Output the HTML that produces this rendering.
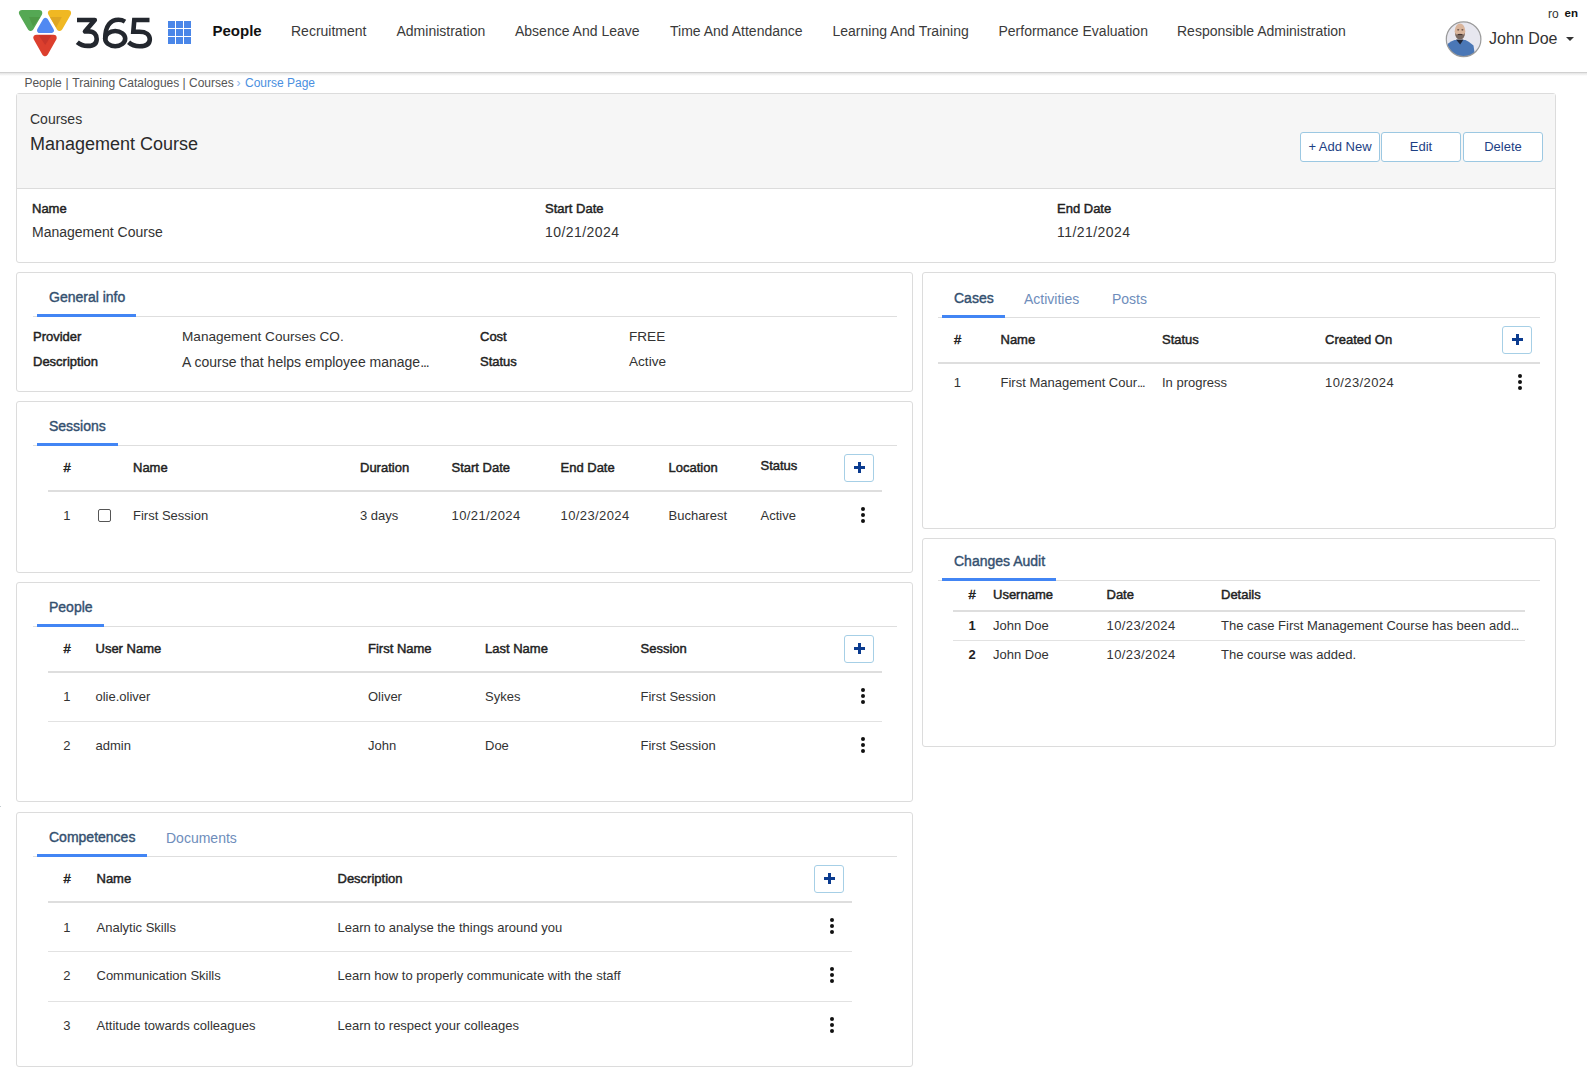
<!DOCTYPE html>
<html><head><meta charset="utf-8"><title>Course Page</title>
<style>
html,body{margin:0;padding:0;background:#fff;width:1587px;height:1072px;overflow:hidden;position:relative;font-family:"Liberation Sans",sans-serif;}
.t{position:absolute;white-space:nowrap;line-height:1;}
</style></head><body>
<div style="position:absolute;left:0px;top:0px;width:1587px;height:72px;background:#fff"></div>
<div style="position:absolute;left:0px;top:72px;width:1587px;height:1px;background:#d0d0d0"></div>
<div style="position:absolute;left:0px;top:73px;width:1587px;height:3px;background:linear-gradient(#e4e4e4,#fff)"></div>
<svg style="position:absolute;left:0;top:0" width="80" height="60" viewBox="0 0 80 60">
<g stroke-linejoin="round">
<path d="M22.2,13.1 L39.1,13.1 L30.65,27.7 Z" fill="#55a854" stroke="#55a854" stroke-width="6.4"/>
<path d="M51.2,13.1 L67.9,13.1 L59.55,27.7 Z" fill="#f0b823" stroke="#f0b823" stroke-width="6.4"/>
<path d="M45.45,20.6 L51.1,30.3 L39.8,30.3 Z" fill="#5189f2" stroke="#5189f2" stroke-width="5.6"/>
<path d="M36.6,37.9 L53.5,37.9 L45.05,52.9 Z" fill="#dc3f2e" stroke="#dc3f2e" stroke-width="6.4"/>
</g>
<path d="M29,17.1 L40.3,17.1 L33.1,26.6 Z" fill="#4e9a47"/>
<path d="M50,17.1 L61.8,17.1 L56.2,27.6 Z" fill="#dea623"/>
<path d="M38.7,35.3 L51.6,35.3 L45.2,45 Z" fill="#c8352b"/>
</svg>
<svg style="position:absolute;left:0;top:0" width="160" height="60" viewBox="0 0 160 60">
<g fill="none" stroke="#23272e" stroke-width="4.6" stroke-linejoin="miter" stroke-linecap="butt">
<path d="M77,20 H94.8 L85,31.4 H88.5 C94.3,31.4 96.7,34.8 96.7,38.9 C96.7,43.6 93.2,45.9 87.6,45.9 C83.5,45.9 80,44.6 77.3,42.2" stroke-linejoin="round"/>
<ellipse cx="115.2" cy="38.6" rx="10" ry="7.6"/>
<path d="M105.2,39 C105.2,25 111,19.8 118.5,19.8 C121,19.8 123,20.4 125,21.6"/>
<path d="M149.5,20 H134.3 L133.3,31.8 H139.5 C146,31.8 149.8,34.6 149.8,39.3 C149.8,44.3 145.6,46.3 139.6,46.3 C135.1,46.3 131.3,44.8 128.6,42.3"/>
</g></svg>
<div style="position:absolute;left:168px;top:21px;width:7px;height:7px;background:#4a86e8"></div>
<div style="position:absolute;left:176px;top:21px;width:7px;height:7px;background:#4a86e8"></div>
<div style="position:absolute;left:184px;top:21px;width:7px;height:7px;background:#4a86e8"></div>
<div style="position:absolute;left:168px;top:29px;width:7px;height:7px;background:#4a86e8"></div>
<div style="position:absolute;left:176px;top:29px;width:7px;height:7px;background:#4a86e8"></div>
<div style="position:absolute;left:184px;top:29px;width:7px;height:7px;background:#4a86e8"></div>
<div style="position:absolute;left:168px;top:37px;width:7px;height:7px;background:#4a86e8"></div>
<div style="position:absolute;left:176px;top:37px;width:7px;height:7px;background:#4a86e8"></div>
<div style="position:absolute;left:184px;top:37px;width:7px;height:7px;background:#4a86e8"></div>
<div class="t" style="left:212.5px;top:23.30px;font-size:15px;font-weight:700;color:#111;">People</div>
<div class="t" style="left:291px;top:24.15px;font-size:14px;font-weight:400;color:#3a3a3a;">Recruitment</div>
<div class="t" style="left:396.5px;top:24.15px;font-size:14px;font-weight:400;color:#3a3a3a;">Administration</div>
<div class="t" style="left:515px;top:24.15px;font-size:14px;font-weight:400;color:#3a3a3a;">Absence And Leave</div>
<div class="t" style="left:670px;top:24.15px;font-size:14px;font-weight:400;color:#3a3a3a;">Time And Attendance</div>
<div class="t" style="left:832.5px;top:24.15px;font-size:14px;font-weight:400;color:#3a3a3a;">Learning And Training</div>
<div class="t" style="left:998.5px;top:24.15px;font-size:14px;font-weight:400;color:#3a3a3a;">Performance Evaluation</div>
<div class="t" style="left:1177px;top:24.15px;font-size:14px;font-weight:400;color:#3a3a3a;">Responsible Administration</div>
<div class="t" style="left:1548px;top:7.84px;font-size:12px;font-weight:400;color:#333;">ro</div>
<div class="t" style="left:1564.5px;top:8.27px;font-size:11.5px;font-weight:700;color:#111;">en</div>
<svg style="position:absolute;left:1445px;top:21px" width="38" height="38" viewBox="0 0 38 38">
<defs><clipPath id="cc"><circle cx="18.6" cy="18.25" r="17.2"/></clipPath></defs>
<g clip-path="url(#cc)">
<rect width="38" height="38" fill="#e7e7ef"/>
<path d="M2.5,23 Q6,20 9.5,19 L20.5,19 Q25,21 28.5,24.5 L29.5,31.5 L30,38 L2,38 Z" fill="#4a77b6"/>
<path d="M11,18.5 L18.5,18.5 L15.2,23.5 Z" fill="#1f2638"/>
<ellipse cx="15" cy="10.3" rx="5.3" ry="7.9" fill="#d9b59c"/>
<path d="M9.9,11.5 Q10.5,18.5 15,18.4 Q19.5,18.5 20.1,11.5 L19,13.5 Q15,12 11,13.5 Z" fill="#7a6a62"/>
<ellipse cx="13.2" cy="8.8" rx="1.1" ry="0.6" fill="#4a3630"/>
<ellipse cx="17.4" cy="8.8" rx="1.1" ry="0.6" fill="#4a3630"/>
<rect x="13" y="13.2" width="4.2" height="0.9" fill="#3b2a26"/>
</g>
<circle cx="18.6" cy="18.25" r="17.3" fill="none" stroke="#9a9a9a" stroke-width="1.2"/>
</svg>
<div class="t" style="left:1489px;top:30.96px;font-size:16px;font-weight:400;color:#333;">John Doe</div>
<div style="position:absolute;left:1566px;top:37px;width:0;height:0;border-left:4px solid transparent;border-right:4px solid transparent;border-top:4px solid #333"></div>
<div class="t" style="left:24.4px;top:76.84px;font-size:12px;font-weight:400;color:#555;">People</div>
<div class="t" style="left:65.5px;top:76.84px;font-size:12px;font-weight:400;color:#555;">|</div>
<div class="t" style="left:72.3px;top:76.84px;font-size:12px;font-weight:400;color:#555;">Training Catalogues</div>
<div class="t" style="left:182.5px;top:76.84px;font-size:12px;font-weight:400;color:#555;">|</div>
<div class="t" style="left:189px;top:76.84px;font-size:12px;font-weight:400;color:#555;">Courses</div>
<div class="t" style="left:236.5px;top:76.84px;font-size:12px;font-weight:400;color:#8ab4ec;">&#x203A;</div>
<div class="t" style="left:245px;top:76.84px;font-size:12px;font-weight:400;color:#4a8fe0;">Course Page</div>
<div style="position:absolute;left:16px;top:93px;width:1540px;height:170px;box-sizing:border-box;border:1px solid #dcdcdc;border-radius:3px;background:#fff;overflow:hidden"></div>
<div style="position:absolute;left:17px;top:94px;width:1538px;height:94px;background:#f6f6f6"></div>
<div style="position:absolute;left:17px;top:188px;width:1538px;height:1px;background:#dcdcdc"></div>
<div class="t" style="left:30px;top:112.15px;font-size:14px;font-weight:400;color:#333;">Courses</div>
<div class="t" style="left:30px;top:135.26px;font-size:18px;font-weight:400;color:#2a2a2a;">Management Course</div>
<div style="position:absolute;left:1300px;top:132px;width:80px;height:30px;box-sizing:border-box;border:1px solid #9cc8e2;border-radius:3px;background:#fff;color:#1d3f84;font-size:13px;line-height:28px;text-align:center;white-space:nowrap">+ Add New</div>
<div style="position:absolute;left:1381px;top:132px;width:80px;height:30px;box-sizing:border-box;border:1px solid #9cc8e2;border-radius:3px;background:#fff;color:#1d3f84;font-size:13px;line-height:28px;text-align:center;white-space:nowrap">Edit</div>
<div style="position:absolute;left:1463px;top:132px;width:80px;height:30px;box-sizing:border-box;border:1px solid #9cc8e2;border-radius:3px;background:#fff;color:#1d3f84;font-size:13px;line-height:28px;text-align:center;white-space:nowrap">Delete</div>
<div class="t" style="left:32px;top:201.90px;font-size:13px;font-weight:400;color:#222;-webkit-text-stroke:0.45px #222;">Name</div>
<div class="t" style="left:32px;top:225.35px;font-size:14px;font-weight:400;color:#333;">Management Course</div>
<div class="t" style="left:545px;top:201.90px;font-size:13px;font-weight:400;color:#222;-webkit-text-stroke:0.45px #222;">Start Date</div>
<div class="t" style="left:545px;top:225.35px;font-size:14px;font-weight:400;color:#333;letter-spacing:0.45px">10/21/2024</div>
<div class="t" style="left:1057px;top:201.90px;font-size:13px;font-weight:400;color:#222;-webkit-text-stroke:0.45px #222;">End Date</div>
<div class="t" style="left:1057px;top:225.35px;font-size:14px;font-weight:400;color:#333;letter-spacing:0.45px">11/21/2024</div>
<div style="position:absolute;left:16px;top:272px;width:897px;height:120px;box-sizing:border-box;border:1px solid #dcdcdc;border-radius:3px;background:#fff"></div>
<div style="position:absolute;left:33px;top:316px;width:864px;height:1px;background:#dedede"></div>
<div class="t" style="left:49px;top:289.55px;font-size:14px;font-weight:400;color:#34506f;-webkit-text-stroke:0.4px #34506f;">General info</div>
<div style="position:absolute;left:37px;top:314px;width:99px;height:3px;background:#4285f4"></div>
<div class="t" style="left:33px;top:329.60px;font-size:13px;font-weight:400;color:#222;-webkit-text-stroke:0.45px #222;">Provider</div>
<div class="t" style="left:33px;top:354.90px;font-size:13px;font-weight:400;color:#222;-webkit-text-stroke:0.45px #222;">Description</div>
<div class="t" style="left:182px;top:329.69px;font-size:13.6px;font-weight:400;color:#333;">Management Courses CO.</div>
<div class="t" style="left:182px;top:354.65px;font-size:14px;font-weight:400;color:#333;">A course that helps employee manage<span style="letter-spacing:-1.1px">...</span></div>
<div class="t" style="left:480px;top:329.60px;font-size:13px;font-weight:400;color:#222;-webkit-text-stroke:0.45px #222;">Cost</div>
<div class="t" style="left:480px;top:354.90px;font-size:13px;font-weight:400;color:#222;-webkit-text-stroke:0.45px #222;">Status</div>
<div class="t" style="left:629px;top:329.69px;font-size:13.6px;font-weight:400;color:#333;">FREE</div>
<div class="t" style="left:629px;top:354.99px;font-size:13.6px;font-weight:400;color:#333;">Active</div>
<div style="position:absolute;left:16px;top:401px;width:897px;height:172px;box-sizing:border-box;border:1px solid #dcdcdc;border-radius:3px;background:#fff"></div>
<div style="position:absolute;left:33px;top:445px;width:864px;height:1px;background:#dedede"></div>
<div class="t" style="left:49px;top:418.55px;font-size:14px;font-weight:400;color:#34506f;-webkit-text-stroke:0.4px #34506f;">Sessions</div>
<div style="position:absolute;left:37px;top:443px;width:81px;height:3px;background:#4285f4"></div>
<div class="t" style="left:63.6px;top:460.90px;font-size:13px;font-weight:400;color:#222;-webkit-text-stroke:0.45px #222;">#</div>
<div class="t" style="left:133px;top:460.90px;font-size:13px;font-weight:400;color:#222;-webkit-text-stroke:0.45px #222;">Name</div>
<div class="t" style="left:360px;top:460.90px;font-size:13px;font-weight:400;color:#222;-webkit-text-stroke:0.45px #222;">Duration</div>
<div class="t" style="left:451.5px;top:460.90px;font-size:13px;font-weight:400;color:#222;-webkit-text-stroke:0.45px #222;">Start Date</div>
<div class="t" style="left:560.5px;top:460.90px;font-size:13px;font-weight:400;color:#222;-webkit-text-stroke:0.45px #222;">End Date</div>
<div class="t" style="left:668.5px;top:460.90px;font-size:13px;font-weight:400;color:#222;-webkit-text-stroke:0.45px #222;">Location</div>
<div class="t" style="left:760.5px;top:459.00px;font-size:13px;font-weight:400;color:#222;-webkit-text-stroke:0.45px #222;">Status</div>
<div style="position:absolute;left:844px;top:454px;width:30px;height:28px;box-sizing:border-box;border:1px solid #a6cfe6;border-radius:3px;background:#fff"></div>
<div style="position:absolute;left:853.5px;top:466.0px;width:11px;height:3px;background:#0b3b8f"></div>
<div style="position:absolute;left:857.5px;top:462.0px;width:3px;height:11px;background:#0b3b8f"></div>
<div style="position:absolute;left:48px;top:490px;width:834px;height:2px;background:#dedede"></div>
<div class="t" style="left:63.3px;top:509.00px;font-size:13px;font-weight:400;color:#333;">1</div>
<div style="position:absolute;left:98px;top:509px;width:13px;height:13px;box-sizing:border-box;border:1px solid #555;border-radius:2px;background:#fff"></div>
<div class="t" style="left:133px;top:509.00px;font-size:13px;font-weight:400;color:#333;">First Session</div>
<div class="t" style="left:360px;top:509.00px;font-size:13px;font-weight:400;color:#333;">3 days</div>
<div class="t" style="left:451.5px;top:509.00px;font-size:13px;font-weight:400;color:#333;letter-spacing:0.4px;">10/21/2024</div>
<div class="t" style="left:560.5px;top:509.00px;font-size:13px;font-weight:400;color:#333;letter-spacing:0.4px;">10/23/2024</div>
<div class="t" style="left:668.5px;top:509.00px;font-size:13px;font-weight:400;color:#333;">Bucharest</div>
<div class="t" style="left:760.5px;top:509.00px;font-size:13px;font-weight:400;color:#333;">Active</div>
<div style="position:absolute;left:860.5px;top:507px;width:4px;height:4px;border-radius:50%;background:#111"></div>
<div style="position:absolute;left:860.5px;top:513px;width:4px;height:4px;border-radius:50%;background:#111"></div>
<div style="position:absolute;left:860.5px;top:519px;width:4px;height:4px;border-radius:50%;background:#111"></div>
<div style="position:absolute;left:16px;top:582px;width:897px;height:220px;box-sizing:border-box;border:1px solid #dcdcdc;border-radius:3px;background:#fff"></div>
<div style="position:absolute;left:33px;top:626px;width:864px;height:1px;background:#dedede"></div>
<div class="t" style="left:49px;top:600.05px;font-size:14px;font-weight:400;color:#34506f;-webkit-text-stroke:0.4px #34506f;">People</div>
<div style="position:absolute;left:37px;top:624px;width:67px;height:3px;background:#4285f4"></div>
<div class="t" style="left:63.6px;top:641.70px;font-size:13px;font-weight:400;color:#222;-webkit-text-stroke:0.45px #222;">#</div>
<div class="t" style="left:95.5px;top:641.70px;font-size:13px;font-weight:400;color:#222;-webkit-text-stroke:0.45px #222;">User Name</div>
<div class="t" style="left:368px;top:641.70px;font-size:13px;font-weight:400;color:#222;-webkit-text-stroke:0.45px #222;">First Name</div>
<div class="t" style="left:485px;top:641.70px;font-size:13px;font-weight:400;color:#222;-webkit-text-stroke:0.45px #222;">Last Name</div>
<div class="t" style="left:640.5px;top:641.70px;font-size:13px;font-weight:400;color:#222;-webkit-text-stroke:0.45px #222;">Session</div>
<div style="position:absolute;left:844px;top:635px;width:30px;height:28px;box-sizing:border-box;border:1px solid #a6cfe6;border-radius:3px;background:#fff"></div>
<div style="position:absolute;left:853.5px;top:647.0px;width:11px;height:3px;background:#0b3b8f"></div>
<div style="position:absolute;left:857.5px;top:643.0px;width:3px;height:11px;background:#0b3b8f"></div>
<div style="position:absolute;left:48px;top:671px;width:834px;height:2px;background:#dedede"></div>
<div class="t" style="left:63.3px;top:690.00px;font-size:13px;font-weight:400;color:#333;">1</div>
<div class="t" style="left:95.5px;top:690.00px;font-size:13px;font-weight:400;color:#333;">olie.oliver</div>
<div class="t" style="left:368px;top:690.00px;font-size:13px;font-weight:400;color:#333;">Oliver</div>
<div class="t" style="left:485px;top:690.00px;font-size:13px;font-weight:400;color:#333;">Sykes</div>
<div class="t" style="left:640.5px;top:690.00px;font-size:13px;font-weight:400;color:#333;">First Session</div>
<div style="position:absolute;left:860.5px;top:688px;width:4px;height:4px;border-radius:50%;background:#111"></div>
<div style="position:absolute;left:860.5px;top:694px;width:4px;height:4px;border-radius:50%;background:#111"></div>
<div style="position:absolute;left:860.5px;top:700px;width:4px;height:4px;border-radius:50%;background:#111"></div>
<div class="t" style="left:63.3px;top:739.40px;font-size:13px;font-weight:400;color:#333;">2</div>
<div class="t" style="left:95.5px;top:739.40px;font-size:13px;font-weight:400;color:#333;">admin</div>
<div class="t" style="left:368px;top:739.40px;font-size:13px;font-weight:400;color:#333;">John</div>
<div class="t" style="left:485px;top:739.40px;font-size:13px;font-weight:400;color:#333;">Doe</div>
<div class="t" style="left:640.5px;top:739.40px;font-size:13px;font-weight:400;color:#333;">First Session</div>
<div style="position:absolute;left:860.5px;top:737px;width:4px;height:4px;border-radius:50%;background:#111"></div>
<div style="position:absolute;left:860.5px;top:743px;width:4px;height:4px;border-radius:50%;background:#111"></div>
<div style="position:absolute;left:860.5px;top:749px;width:4px;height:4px;border-radius:50%;background:#111"></div>
<div style="position:absolute;left:48px;top:721px;width:834px;height:1px;background:#e2e2e2"></div>
<div style="position:absolute;left:16px;top:812px;width:897px;height:255px;box-sizing:border-box;border:1px solid #dcdcdc;border-radius:3px;background:#fff"></div>
<div style="position:absolute;left:33px;top:856px;width:864px;height:1px;background:#dedede"></div>
<div class="t" style="left:49px;top:830.05px;font-size:14px;font-weight:400;color:#34506f;-webkit-text-stroke:0.4px #34506f;">Competences</div>
<div style="position:absolute;left:37px;top:854px;width:110px;height:3px;background:#4285f4"></div>
<div class="t" style="left:166px;top:831.35px;font-size:14px;font-weight:400;color:#6e8dbb;">Documents</div>
<div class="t" style="left:63.6px;top:871.70px;font-size:13px;font-weight:400;color:#222;-webkit-text-stroke:0.45px #222;">#</div>
<div class="t" style="left:96.5px;top:871.70px;font-size:13px;font-weight:400;color:#222;-webkit-text-stroke:0.45px #222;">Name</div>
<div class="t" style="left:337.5px;top:871.70px;font-size:13px;font-weight:400;color:#222;-webkit-text-stroke:0.45px #222;">Description</div>
<div style="position:absolute;left:814px;top:865px;width:30px;height:28px;box-sizing:border-box;border:1px solid #a6cfe6;border-radius:3px;background:#fff"></div>
<div style="position:absolute;left:823.5px;top:877.0px;width:11px;height:3px;background:#0b3b8f"></div>
<div style="position:absolute;left:827.5px;top:873.0px;width:3px;height:11px;background:#0b3b8f"></div>
<div style="position:absolute;left:48px;top:901px;width:804px;height:2px;background:#dedede"></div>
<div class="t" style="left:63.3px;top:920.70px;font-size:13px;font-weight:400;color:#333;">1</div>
<div class="t" style="left:96.5px;top:920.70px;font-size:13px;font-weight:400;color:#333;">Analytic Skills</div>
<div class="t" style="left:337.5px;top:920.70px;font-size:13px;font-weight:400;color:#333;">Learn to analyse the things around you</div>
<div style="position:absolute;left:830px;top:918px;width:4px;height:4px;border-radius:50%;background:#111"></div>
<div style="position:absolute;left:830px;top:924px;width:4px;height:4px;border-radius:50%;background:#111"></div>
<div style="position:absolute;left:830px;top:930px;width:4px;height:4px;border-radius:50%;background:#111"></div>
<div class="t" style="left:63.3px;top:969.40px;font-size:13px;font-weight:400;color:#333;">2</div>
<div class="t" style="left:96.5px;top:969.40px;font-size:13px;font-weight:400;color:#333;">Communication Skills</div>
<div class="t" style="left:337.5px;top:969.40px;font-size:13px;font-weight:400;color:#333;">Learn how to properly communicate with the staff</div>
<div style="position:absolute;left:830px;top:967px;width:4px;height:4px;border-radius:50%;background:#111"></div>
<div style="position:absolute;left:830px;top:973px;width:4px;height:4px;border-radius:50%;background:#111"></div>
<div style="position:absolute;left:830px;top:979px;width:4px;height:4px;border-radius:50%;background:#111"></div>
<div class="t" style="left:63.3px;top:1019.20px;font-size:13px;font-weight:400;color:#333;">3</div>
<div class="t" style="left:96.5px;top:1019.20px;font-size:13px;font-weight:400;color:#333;">Attitude towards colleagues</div>
<div class="t" style="left:337.5px;top:1019.20px;font-size:13px;font-weight:400;color:#333;">Learn to respect your colleages</div>
<div style="position:absolute;left:830px;top:1017px;width:4px;height:4px;border-radius:50%;background:#111"></div>
<div style="position:absolute;left:830px;top:1023px;width:4px;height:4px;border-radius:50%;background:#111"></div>
<div style="position:absolute;left:830px;top:1029px;width:4px;height:4px;border-radius:50%;background:#111"></div>
<div style="position:absolute;left:48px;top:951px;width:804px;height:1px;background:#e2e2e2"></div>
<div style="position:absolute;left:48px;top:1001px;width:804px;height:1px;background:#e2e2e2"></div>
<div style="position:absolute;left:0px;top:806px;width:1px;height:1px;background:#c4ccd0"></div>
<div style="position:absolute;left:922px;top:272px;width:634px;height:257px;box-sizing:border-box;border:1px solid #dcdcdc;border-radius:3px;background:#fff"></div>
<div style="position:absolute;left:938px;top:317px;width:602px;height:1px;background:#dedede"></div>
<div class="t" style="left:954px;top:290.85px;font-size:14px;font-weight:400;color:#34506f;-webkit-text-stroke:0.4px #34506f;">Cases</div>
<div style="position:absolute;left:942px;top:315px;width:63px;height:3px;background:#4285f4"></div>
<div class="t" style="left:1024px;top:292.15px;font-size:14px;font-weight:400;color:#6e8dbb;">Activities</div>
<div class="t" style="left:1112px;top:292.15px;font-size:14px;font-weight:400;color:#6e8dbb;">Posts</div>
<div class="t" style="left:954px;top:332.90px;font-size:13px;font-weight:400;color:#222;-webkit-text-stroke:0.45px #222;">#</div>
<div class="t" style="left:1000.5px;top:332.90px;font-size:13px;font-weight:400;color:#222;-webkit-text-stroke:0.45px #222;">Name</div>
<div class="t" style="left:1162px;top:332.90px;font-size:13px;font-weight:400;color:#222;-webkit-text-stroke:0.45px #222;">Status</div>
<div class="t" style="left:1325px;top:332.90px;font-size:13px;font-weight:400;color:#222;-webkit-text-stroke:0.45px #222;">Created On</div>
<div style="position:absolute;left:1502px;top:326px;width:30px;height:28px;box-sizing:border-box;border:1px solid #a6cfe6;border-radius:3px;background:#fff"></div>
<div style="position:absolute;left:1511.5px;top:338.0px;width:11px;height:3px;background:#0b3b8f"></div>
<div style="position:absolute;left:1515.5px;top:334.0px;width:3px;height:11px;background:#0b3b8f"></div>
<div style="position:absolute;left:938px;top:362px;width:602px;height:2px;background:#dedede"></div>
<div class="t" style="left:953.8px;top:376.40px;font-size:13px;font-weight:400;color:#333;">1</div>
<div class="t" style="left:1000.5px;top:376.40px;font-size:13px;font-weight:400;color:#333;">First Management Cour<span style="letter-spacing:-1.1px">...</span></div>
<div class="t" style="left:1162px;top:376.40px;font-size:13px;font-weight:400;color:#333;">In progress</div>
<div class="t" style="left:1325px;top:376.40px;font-size:13px;font-weight:400;color:#333;letter-spacing:0.4px;">10/23/2024</div>
<div style="position:absolute;left:1518px;top:374px;width:4px;height:4px;border-radius:50%;background:#111"></div>
<div style="position:absolute;left:1518px;top:380px;width:4px;height:4px;border-radius:50%;background:#111"></div>
<div style="position:absolute;left:1518px;top:386px;width:4px;height:4px;border-radius:50%;background:#111"></div>
<div style="position:absolute;left:922px;top:538px;width:634px;height:209px;box-sizing:border-box;border:1px solid #dcdcdc;border-radius:3px;background:#fff"></div>
<div style="position:absolute;left:938px;top:580px;width:602px;height:1px;background:#dedede"></div>
<div class="t" style="left:954px;top:554.25px;font-size:14px;font-weight:400;color:#34506f;-webkit-text-stroke:0.4px #34506f;">Changes Audit</div>
<div style="position:absolute;left:942px;top:578px;width:114px;height:3px;background:#4285f4"></div>
<div class="t" style="left:968.5px;top:588.40px;font-size:13px;font-weight:400;color:#222;-webkit-text-stroke:0.45px #222;">#</div>
<div class="t" style="left:993px;top:588.40px;font-size:13px;font-weight:400;color:#222;-webkit-text-stroke:0.45px #222;">Username</div>
<div class="t" style="left:1106.5px;top:588.40px;font-size:13px;font-weight:400;color:#222;-webkit-text-stroke:0.45px #222;">Date</div>
<div class="t" style="left:1221px;top:588.40px;font-size:13px;font-weight:400;color:#222;-webkit-text-stroke:0.45px #222;">Details</div>
<div style="position:absolute;left:953px;top:610px;width:572px;height:2px;background:#dedede"></div>
<div class="t" style="left:968.5px;top:619.00px;font-size:13px;font-weight:700;color:#222;">1</div>
<div class="t" style="left:993px;top:619.00px;font-size:13px;font-weight:400;color:#333;">John Doe</div>
<div class="t" style="left:1106.5px;top:619.00px;font-size:13px;font-weight:400;color:#333;letter-spacing:0.4px;">10/23/2024</div>
<div class="t" style="left:1221px;top:619.00px;font-size:13px;font-weight:400;color:#333;">The case First Management Course has been add<span style="letter-spacing:-1.1px">...</span></div>
<div class="t" style="left:968.5px;top:647.90px;font-size:13px;font-weight:700;color:#222;">2</div>
<div class="t" style="left:993px;top:647.90px;font-size:13px;font-weight:400;color:#333;">John Doe</div>
<div class="t" style="left:1106.5px;top:647.90px;font-size:13px;font-weight:400;color:#333;letter-spacing:0.4px;">10/23/2024</div>
<div class="t" style="left:1221px;top:647.90px;font-size:13px;font-weight:400;color:#333;">The course was added.</div>
<div style="position:absolute;left:953px;top:640px;width:572px;height:1px;background:#e2e2e2"></div>
</body></html>
